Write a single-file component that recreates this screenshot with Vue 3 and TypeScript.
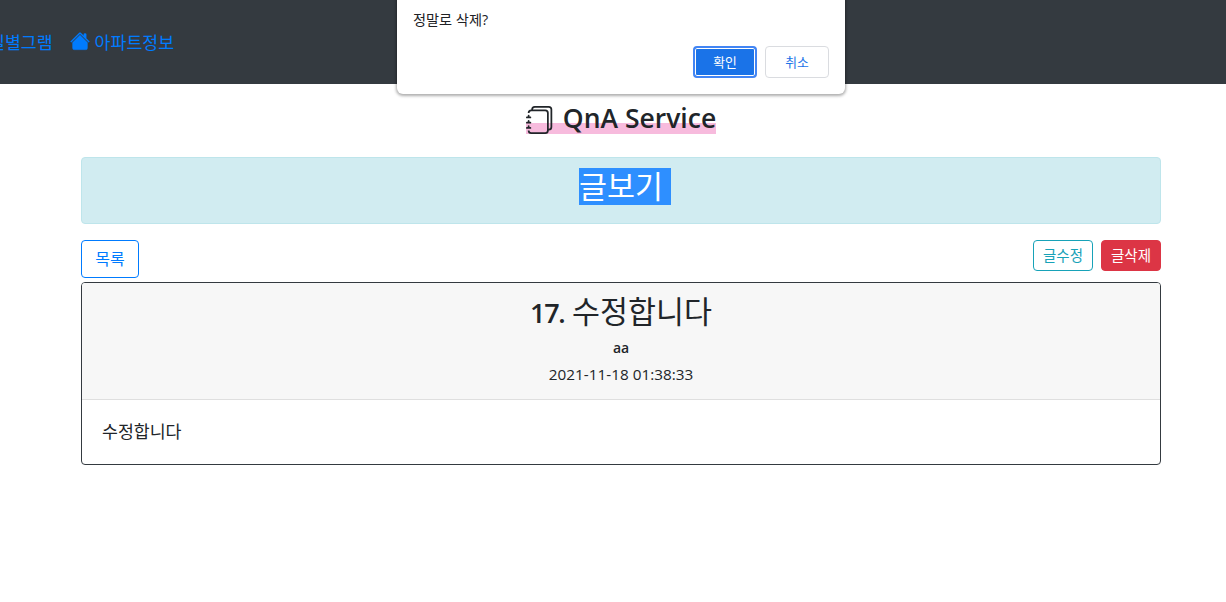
<script setup lang="ts">
const title = '수정합니다'
</script>

<template>
  <div class="page">
    <nav class="navbar">
      <a class="nav-link clipped">일별그램</a>
      <a class="nav-link">
        <svg class="home" viewBox="0 0 16 16" width="20" height="20" fill="#007bff" stroke="#007bff" stroke-width=".25">
          <path d="M8.707 1.5a1 1 0 0 0-1.414 0L.646 8.146a.5.5 0 0 0 .708.708L8 2.207l6.646 6.647a.5.5 0 0 0 .708-.708L13 5.793V2.5a.5.5 0 0 0-.5-.5h-1a.5.5 0 0 0-.5.5v1.293L8.707 1.5Z" />
          <path d="m8 3.293 6 6V13.5a1.5 1.5 0 0 1-1.5 1.5h-9A1.5 1.5 0 0 1 2 13.5V9.293l6-6Z" />
        </svg>아파트정보
      </a>
    </nav>

    <div class="dialog" role="dialog">
      <p class="dialog-msg">정말로 삭제?</p>
      <div class="dialog-actions">
        <button class="dlg-btn ok">확인</button>
        <button class="dlg-btn cancel">취소</button>
      </div>
    </div>

    <main class="container">
      <h3 class="brand">
        <span class="mark">
          <svg class="journals" viewBox="0 0 16 16" width="28" height="28" fill="#212529">
            <path d="M5 0h8a2 2 0 0 1 2 2v10a2 2 0 0 1-2 2 2 2 0 0 1-2 2H3a2 2 0 0 1-2-2h1a1 1 0 0 0 1 1h8a1 1 0 0 0 1-1V4a1 1 0 0 0-1-1H3a1 1 0 0 0-1 1H1a2 2 0 0 1 2-2h8a2 2 0 0 1 2 2v9a1 1 0 0 0 1-1V2a1 1 0 0 0-1-1H5a1 1 0 0 0-1 1H3a2 2 0 0 1 2-2z" />
            <path d="M1 6v-.5a.5.5 0 0 1 1 0V6h.5a.5.5 0 0 1 0 1h-2a.5.5 0 0 1 0-1H1zm0 3v-.5a.5.5 0 0 1 1 0V9h.5a.5.5 0 0 1 0 1h-2a.5.5 0 0 1 0-1H1zm0 2.5v.5H.5a.5.5 0 0 0 0 1h2a.5.5 0 0 0 0-1H2v-.5a.5.5 0 0 0-1 0z" />
          </svg>
          <span class="brand-name">QnA Service</span>
        </span>
      </h3>

      <div class="alert"><span class="selected">글보기</span></div>

      <div class="toolbar">
        <button class="btn list">목록</button>
        <div class="toolbar-right">
          <button class="btn sm edit">글수정</button>
          <button class="btn sm del">글삭제</button>
        </div>
      </div>

      <section class="card">
        <header class="card-header">
          <h3 class="card-title"><b>17.</b> {{ title }}</h3>
          <div class="author">aa</div>
          <div class="date">2021-11-18 01:38:33</div>
        </header>
        <div class="card-body">{{ title }}</div>
      </section>
    </main>
  </div>
</template>

<style>
html, body { margin: 0; background: #fff; overflow: hidden; }
</style>

<style scoped>
.page {
  position: relative;
  width: 1226px;
  height: 602px;
  overflow: hidden;
  font-family: "Open Sans", "Noto Sans CJK KR", sans-serif;
  color: #212529;
  font-size: 16px;
}
.navbar {
  height: 84px;
  background: #343a40;
  display: flex;
  align-items: center;
  gap: 17px;
  margin-left: -11px;
  padding-bottom: 2px;
  box-sizing: border-box;
}
.nav-link {
  color: #007bff;
  font-size: 17.3px;
  display: flex;
  align-items: center;
  white-space: nowrap;
}
.home { margin-right: 5px; }
.dialog {
  position: absolute;
  left: 397px;
  top: -10px;
  width: 448px;
  height: 104px;
  box-sizing: border-box;
  background: #fff;
  border-radius: 0 0 6px 6px;
  box-shadow: 0 1px 3px 1px rgba(0, 0, 0, 0.32);
  padding: 0 16px;
}
.dialog-msg {
  margin: 21px 0 0;
  font-size: 14.2px;
  line-height: 17px;
  color: #202124;
}
.dialog-actions {
  display: flex;
  justify-content: flex-end;
  gap: 8px;
  margin-top: 18px;
}
.dlg-btn {
  font-family: inherit;
  width: 64px;
  height: 32px;
  border-radius: 4px;
  font-size: 12.8px;
  padding: 0 0 2px;
}
.ok {
  background: #1a73e8;
  color: #fff;
  border: 2px solid #4285f4;
  box-shadow: inset 0 0 0 1px #fff;
}
.cancel {
  background: #fff;
  color: #1a73e8;
  border: 1px solid #dadce0;
}
.container {
  width: 1080px;
  margin: 0 auto;
  position: relative;
  left: 8px;
}
.brand {
  margin: 0;
  height: 73px;
  box-sizing: border-box;
  padding-top: 16px;
  text-align: center;
  font-size: 26.5px;
  line-height: 36px;
  font-weight: 600;
}
.mark {
  display: inline-block;
  line-height: 32px;
  background: linear-gradient(transparent 65%, #f7bbdd 65%);
}
.brand-name { margin-left: 9px; }
.journals { vertical-align: -6px; }
.alert {
  height: 67px;
  box-sizing: border-box;
  background: #d1ecf1;
  border: 1px solid #bee5eb;
  border-radius: 4px;
  text-align: center;
  padding-top: 10px;
  font-size: 30.4px;
  line-height: 37px;
}
.selected {
  display: inline-block;
  background: #2e8fff;
  color: #fff;
  height: 37px;
  padding-right: 8px;
  margin-right: -8px;
}
.toolbar {
  display: flex;
  justify-content: space-between;
  margin-top: 16px;
  height: 42px;
}
.toolbar-right { display: flex; gap: 8px; align-items: flex-start; }
.btn {
  font-family: inherit;
  background: #fff;
  border-radius: 4px;
  padding: 0 0 3px;
}
.list {
  width: 58px;
  height: 38px;
  border: 1px solid #007bff;
  color: #007bff;
  font-size: 16px;
}
.sm { width: 60px; height: 31px; font-size: 14.5px; }
.edit { border: 1px solid #17a2b8; color: #17a2b8; }
.del { background: #dc3545; border: 1px solid #dc3545; color: #fff; }
.card {
  border: 1px solid #343a40;
  border-radius: 4px;
  height: 183px;
  box-sizing: border-box;
  overflow: hidden;
}
.card-header {
  height: 117px;
  box-sizing: border-box;
  background: #f7f7f7;
  border-bottom: 1px solid #dfdfdf;
  text-align: center;
  padding-top: 10px;
}
.card-title {
  margin: 0;
  font-size: 30.4px;
  font-weight: 400;
  line-height: 38px;
}
.card-title b { font-weight: 600; font-size: 27px; letter-spacing: -1.4px; }
.author { font-size: 14px; font-weight: 600; line-height: 20px; margin-top: 6px; }
.date { font-size: 15.3px; line-height: 20px; margin-top: 6px; }
.card-body {
  padding: 20px;
  font-size: 17.3px;
  line-height: 24px;
}
</style>
